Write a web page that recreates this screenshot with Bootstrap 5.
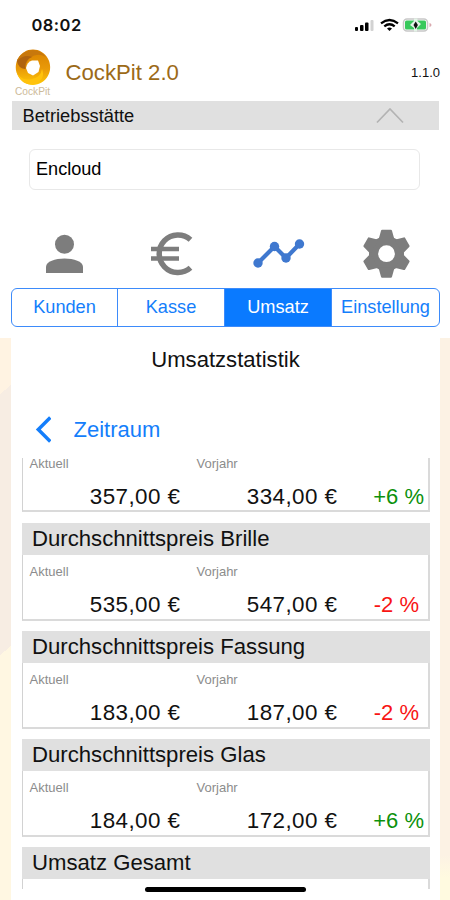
<!DOCTYPE html>
<html lang="de">
<head>
<meta charset="utf-8">
<meta name="viewport" content="width=device-width, initial-scale=1">
<title>CockPit 2.0</title>
<link href="https://cdn.jsdelivr.net/npm/bootstrap@5.3.0/dist/css/bootstrap.min.css" rel="stylesheet">
<style>
body{font-family:"Liberation Sans",Arial,sans-serif;color:#111;line-height:1;background:#fff}
.phone{width:450px;height:900px}
.status{height:46px;padding:16px 18px 0 31.5px}
.clock{font:600 16.5px/18px Inter,sans-serif;letter-spacing:.45px}
.brand{height:55px;padding:3px 10px 0 13px}
.logo-box{width:40px}
.app-name{font-size:22.2px;color:#9c6a18;margin-left:12.5px;height:48px}
.version{font-size:13px;height:47px}
.section-bar{height:29px;margin:0 11px 0 12px;padding:2px 35px 0 10.5px;background:#e0e0e0;font-size:18.3px}
.site-field{height:41px;margin:19px 30px 0 29px;padding:0 0 0 6px;border:1px solid #e8e8e8;border-radius:6px;font-size:18.1px;color:#000}
.icons{height:64px;margin:34px 11px 0 11px}
.tabs{height:39px;margin:0 10px 0 11px;border:1px solid #3d8bfa;border-radius:6px;font-size:18.2px;color:#147efb}
.tab{flex:0 0 107px}
.tab+.tab{border-left:1px solid #3d8bfa}
.tab:first-child{flex-basis:105px}
.tab:last-child{flex-basis:108px}
.tab.on{background:#0a7aff;color:#fff}
.lower{padding:0 10px 0 11px;height:562px;margin-top:11px;position:relative;
 background:linear-gradient(#fcf2e4,#fcf2e4 92%,#fffae0 96%) right/10px 100% no-repeat,
 linear-gradient(140deg,#fff3e2 43px,#f7ede3 43px 243px,#fff7e2 243px) left/11px 100% no-repeat}
.page-title{font-size:22.1px;height:45px}
.back{font-size:22px;color:#147efb;height:75px;padding:18px 0 0 24px}
.back span{margin-left:22.5px}
.scroller{height:431px;margin:0 10.5px 0 11px}
.stat{height:97.700px;margin-bottom:10.300px;border:1px solid #d2d2d2;border-right-width:2px;border-bottom-width:2px;border-right-color:#dadada;border-bottom-color:#dadada;border-top:0;flex:none}
.stat-head{height:32px;margin:0 -2px 0 -1px;background:#e0e0e0;padding:1px 0 0 10px;font-size:22.150px}
.cap-line{font-size:13px;color:#8c8c8c;height:33px;padding:10px 0 0 6.500px}
.cap-line span{width:167px}
.partial{height:54px;margin-bottom:11px}
.partial .cap-line{height:22px;padding-top:0;margin-top:-1px;margin-bottom:1px}
.vals{font-size:22.400px;height:30px;padding-top:6px;letter-spacing:.450px}
.vals .a{width:157.500px}.vals .b{width:157px}
.vals .p{width:88px;letter-spacing:0;font-size:22px;padding-right:1.500px}
.vals .neg{padding-right:6.500px}
.up{color:#0c910c}.neg{color:#f81414}
.tail{height:42px}
.home{position:absolute;left:145px;top:549px;width:161px;height:5px;border-radius:3px;background:#000}
</style>
<script src="https://cdn.jsdelivr.net/npm/bootstrap@5.3.0/dist/js/bootstrap.bundle.min.js"></script>
</head>
<body>
<main class="phone overflow-hidden">
 <div class="status d-flex justify-content-between align-items-start">
  <span class="clock">08:02</span>
  <svg width="78" height="18" viewBox="0 0 78 18">
   <g><rect x="1" y="11" width="3" height="4" rx="1"/><rect x="6" y="9" width="3.500" height="6" rx="1"/><rect x="11" y="6.500" width="3.500" height="8.500" rx="1"/><rect x="16.500" y="4" width="3" height="11" rx="1" fill="#d2d2d2"/></g>
   <g fill="none" stroke="#000" stroke-width="2.300"><path d="M27 7.300Q35.500 .8 44 7.300"/><path d="M30.300 10.300Q35.500 6.200 40.700 10.300"/></g><path d="M33 12.600Q35.500 10.500 38 12.600L35.500 15Z"/>
   <rect x="49.500" y="3" width="24" height="12" rx="3.500" fill="#fff" stroke="#c8c8c8" stroke-width="1.500"/><rect x="51" y="4.500" width="21" height="9" rx="1.500" fill="#38c95c"/><path d="M60 2.500h3.500v2.500l3.500 3-4 4v3.500H60V12l-4-3 4-4Z" fill="#e4f5e8"/><path d="M61.700 5.500l-2.200 3.500 2.200 4 2.200-4Z" fill="#111"/><path d="M75.500 7v4q2-.5 2-2t-2-2Z" fill="#d9a9ae"/>
  </svg>
 </div>
 <div class="brand d-flex align-items-start">
  <div class="logo-box">
   <svg class="d-block" width="40" height="49" viewBox="0 0 40 49">
    <defs><linearGradient id="gold" x1="0" y1="0" x2="0" y2="1"><stop offset="0" stop-color="#d98200"/><stop offset=".55" stop-color="#e99a08"/><stop offset="1" stop-color="#ffc908"/></linearGradient></defs>
    <path fill="url(#gold)" d="M20 .5A17.200 17.700 0 1 1 19.900 .5Z"/>
    <path d="M4 11Q10 1 20 1Q29 2 33 8Q24 3 17 9Q12 13 13 20Q5 18 4 11Z" fill="#c8780c"/><path d="M4 12Q11 5 19 8Q12 10 12 20Q5 19 4 12Z" fill="#b0640f"/>
    <path d="M3 21Q7 33 19 30Q28 28 29 20Q33 30 22 35Q8 38 3 21Z" fill="#ffc20c"/>
    <path d="M13 19Q14 13 19 11.500L25 11.500L27 17L25.500 23L20 26.500L15 24Z" fill="#fff"/>
    <text x="2" y="45.500" font-size="10.500" textLength="35" lengthAdjust="spacingAndGlyphs" fill="#cdbb9a" font-family="Liberation Sans">CockPit</text>
   </svg>
  </div>
  <span class="app-name d-flex align-items-center">CockPit 2.0</span>
  <span class="version d-flex align-items-center ms-auto">1.1.0</span>
 </div>
 <div class="section-bar d-flex align-items-center justify-content-between"><span>Betriebsstätte</span>
  <svg width="28" height="17" viewBox="0 0 28 17"><path d="M1 14.500L14 1L27 14.500" fill="none" stroke="#b3b3b3" stroke-width="1.700"/></svg>
 </div>
 <div class="site-field d-flex align-items-center">Encloud</div>
 <div class="icons d-flex">
  <svg width="107" height="64" viewBox="11 223 107 64" fill="#7d7d7d"><circle cx="64.500" cy="243.300" r="9.500"/><path d="M46 272v-6C46 254.500 83 254.500 83 266v6Z"/></svg>
  <svg width="107" height="64" viewBox="118 223 107 64" fill="none" stroke="#7d7d7d" stroke-width="5.500"><path d="M190.500 238.700A18.800 18.800 0 1 0 190.500 266.800"/><path d="M151 248h28M151 257.500h28" stroke-width="4.600"/></svg>
  <svg width="107" height="64" viewBox="225 223 107 64" fill="#3f78cf"><path d="M258 262L274.500 245.500L286 257L299.500 243" fill="none" stroke="#3f78cf" stroke-width="4.200"/><circle cx="258" cy="262" r="4.700"/><circle cx="274.500" cy="245.500" r="4.700"/><circle cx="286" cy="257" r="4.700"/><circle cx="299.500" cy="243" r="4.700"/></svg>
  <svg width="107" height="64" viewBox="332 223 107 64">
   <g fill="#7d7d7d" transform="translate(386.500 252.700)"><circle r="17.500"/>
    <g id="teeth"><path id="tooth" d="M-8 -14L-5.500 -23Q-5.300 -24 -4.300 -24H4.300Q5.300 -24 5.500 -23L8 -14Z"/><use href="#tooth" transform="rotate(60)"/><use href="#tooth" transform="rotate(120)"/></g><use href="#teeth" transform="rotate(180)"/>
    <circle r="8.400" fill="#fff"/></g></svg>
 </div>
 <div class="tabs d-flex overflow-hidden">
  <div class="tab d-flex align-items-center justify-content-center">Kunden</div>
  <div class="tab d-flex align-items-center justify-content-center">Kasse</div>
  <div class="tab on d-flex align-items-center justify-content-center">Umsatz</div>
  <div class="tab d-flex align-items-center justify-content-center">Einstellung</div>
 </div>
 <section class="lower">
  <div class="page-title d-flex align-items-center justify-content-center">Umsatzstatistik</div>
  <div class="back d-flex align-items-center">
   <svg width="16" height="28" viewBox="0 0 16 28"><path d="M15.300 1.500L3.300 13.500L15.300 25.500" fill="none" stroke="#147efb" stroke-width="3.500"/></svg><span>Zeitraum</span>
  </div>
  <div class="scroller d-flex flex-column">
   <div class="stat partial"><div class="cap-line d-flex"><span>Aktuell</span><span>Vorjahr</span></div><div class="vals d-flex text-end"><span class="a">357,00 €</span><span class="b">334,00 €</span><span class="p up">+6 %</span></div></div>
   <div class="stat"><div class="stat-head d-flex align-items-center">Durchschnittspreis Brille</div><div class="cap-line d-flex"><span>Aktuell</span><span>Vorjahr</span></div><div class="vals d-flex text-end"><span class="a">535,00 €</span><span class="b">547,00 €</span><span class="p neg">-2 %</span></div></div>
   <div class="stat"><div class="stat-head d-flex align-items-center">Durchschnittspreis Fassung</div><div class="cap-line d-flex"><span>Aktuell</span><span>Vorjahr</span></div><div class="vals d-flex text-end"><span class="a">183,00 €</span><span class="b">187,00 €</span><span class="p neg">-2 %</span></div></div>
   <div class="stat"><div class="stat-head d-flex align-items-center">Durchschnittspreis Glas</div><div class="cap-line d-flex"><span>Aktuell</span><span>Vorjahr</span></div><div class="vals d-flex text-end"><span class="a">184,00 €</span><span class="b">172,00 €</span><span class="p up">+6 %</span></div></div>
   <div class="stat tail border-bottom-0 mb-0"><div class="stat-head d-flex align-items-center">Umsatz Gesamt</div></div>
  </div>
  <div class="home"></div>
 </section>
</main>
</body>
</html>
